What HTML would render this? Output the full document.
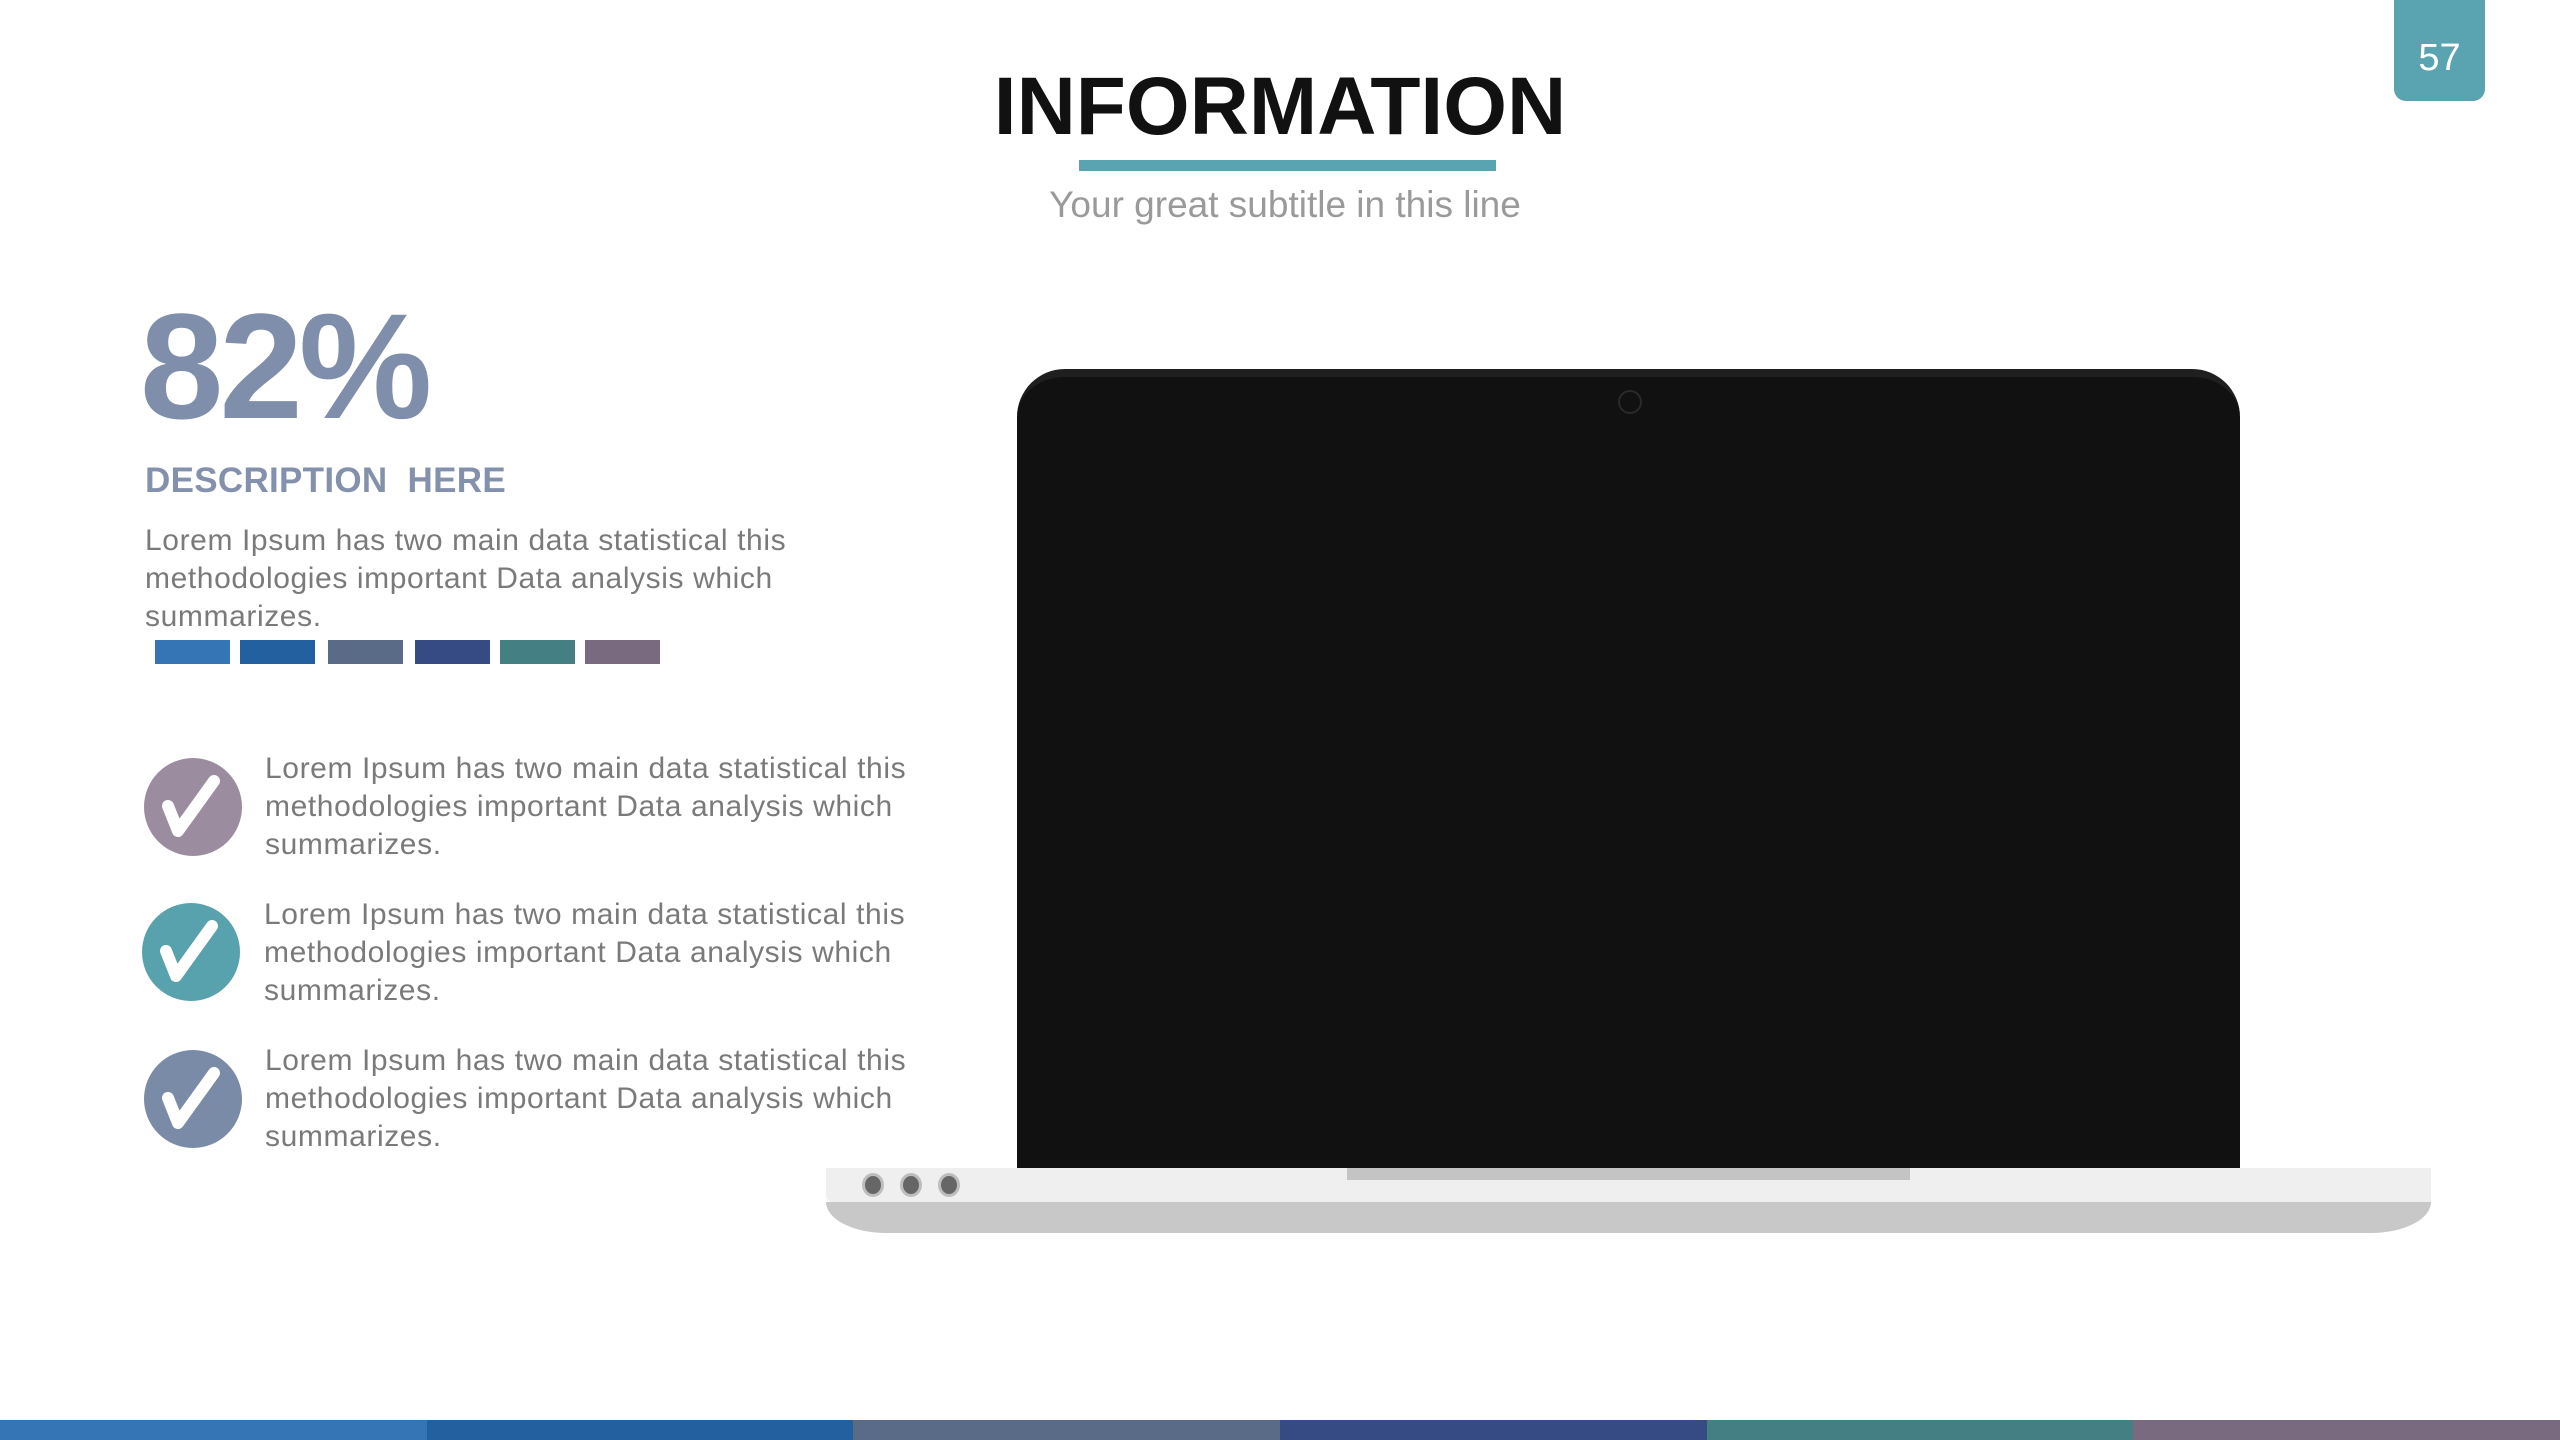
<!DOCTYPE html>
<html><head><meta charset="utf-8"><style>
*{margin:0;padding:0;box-sizing:border-box}
body{width:2560px;height:1440px;background:#fff;position:relative;overflow:hidden;font-family:"Liberation Sans",sans-serif}
.a{position:absolute}
.p{color:#7a7a7a;font-size:30px;line-height:38px;white-space:nowrap;letter-spacing:0.6px}
</style></head><body>
<div class="a" style="left:2394px;top:0;width:91px;height:101px;background:#5aa3b0;border-radius:0 0 12px 12px;color:#fff;font-size:38px;text-align:center;line-height:116px">57</div>
<div class="a" style="left:0;width:2560px;top:60px;text-align:center;font-weight:bold;font-size:82px;color:#111;letter-spacing:0px">INFORMATION</div>
<div class="a" style="left:1079px;top:160px;width:417px;height:11px;background:#5aa3b0"></div>
<div class="a" style="left:0;width:2570px;top:184px;text-align:center;font-size:37px;color:#9a9a9a">Your great subtitle in this line</div>
<div class="a" style="left:140px;top:280px;font-weight:bold;font-size:150px;color:#7f8fab;letter-spacing:-4px">82%</div>
<div class="a" style="left:145px;top:461px;font-weight:bold;font-size:35px;color:#8391ad;letter-spacing:0.3px;white-space:pre">DESCRIPTION  HERE</div>
<div class="a p" style="left:145px;top:522px">Lorem Ipsum has two main data statistical this<br>methodologies important Data analysis which<br>summarizes.</div>
<div class="a" style="left:155px;top:640px;width:75px;height:24px;background:#3574b5"></div>
<div class="a" style="left:240px;top:640px;width:75px;height:24px;background:#2260a0"></div>
<div class="a" style="left:328px;top:640px;width:75px;height:24px;background:#596b87"></div>
<div class="a" style="left:415px;top:640px;width:75px;height:24px;background:#364b83"></div>
<div class="a" style="left:500px;top:640px;width:75px;height:24px;background:#437f83"></div>
<div class="a" style="left:585px;top:640px;width:75px;height:24px;background:#7a6a80"></div>

<svg class="a" style="left:0;top:0" width="400" height="1200">
<circle cx="193" cy="807" r="49" fill="#9b8d9f"/>
<circle cx="191" cy="952" r="49" fill="#58a2ad"/>
<circle cx="193" cy="1099" r="49" fill="#7a8ba8"/>
<g fill="none" stroke="#fff" stroke-width="12" stroke-linecap="round" stroke-linejoin="round">
<path d="M168 806 L178 831 L214 781"/>
<path d="M166 951 L176 976 L212 926"/>
<path d="M168 1098 L178 1123 L214 1073"/>
</g></svg>
<div class="a p" style="left:265px;top:750px">Lorem Ipsum has two main data statistical this<br>methodologies important Data analysis which<br>summarizes.</div>
<div class="a p" style="left:264px;top:896px">Lorem Ipsum has two main data statistical this<br>methodologies important Data analysis which<br>summarizes.</div>
<div class="a p" style="left:265px;top:1042px">Lorem Ipsum has two main data statistical this<br>methodologies important Data analysis which<br>summarizes.</div>

<div class="a" style="left:1017px;top:369px;width:1223px;height:800px;background:#111;border-radius:48px 48px 0 0;border-top:8px solid #1f1f1f"></div>
<div class="a" style="left:1618px;top:390px;width:24px;height:24px;border-radius:50%;border:2px solid #2a2a2a"></div>
<div class="a" style="left:826px;top:1202px;width:1605px;height:31px;background:#c8c8c8;border-radius:0 0 60px 60px / 0 0 31px 31px"></div>
<div class="a" style="left:826px;top:1168px;width:1605px;height:34px;background:#efefef;border-radius:0 0 0 6px"></div>
<div class="a" style="left:1347px;top:1168px;width:563px;height:12px;background:#c4c4c4"></div>
<div class="a" style="left:862px;top:1173px;width:22px;height:24px;border-radius:50%;background:#666;border:3px solid #bdbdbd"></div>
<div class="a" style="left:900px;top:1173px;width:22px;height:24px;border-radius:50%;background:#666;border:3px solid #bdbdbd"></div>
<div class="a" style="left:938px;top:1173px;width:22px;height:24px;border-radius:50%;background:#666;border:3px solid #bdbdbd"></div>

<div class="a" style="left:0;top:1420px;width:427px;height:20px;background:#3574b5"></div>
<div class="a" style="left:427px;top:1420px;width:426px;height:20px;background:#2260a0"></div>
<div class="a" style="left:853px;top:1420px;width:427px;height:20px;background:#596b87"></div>
<div class="a" style="left:1280px;top:1420px;width:427px;height:20px;background:#364b83"></div>
<div class="a" style="left:1707px;top:1420px;width:426px;height:20px;background:#437f83"></div>
<div class="a" style="left:2133px;top:1420px;width:427px;height:20px;background:#7a6a80"></div>
</body></html>
